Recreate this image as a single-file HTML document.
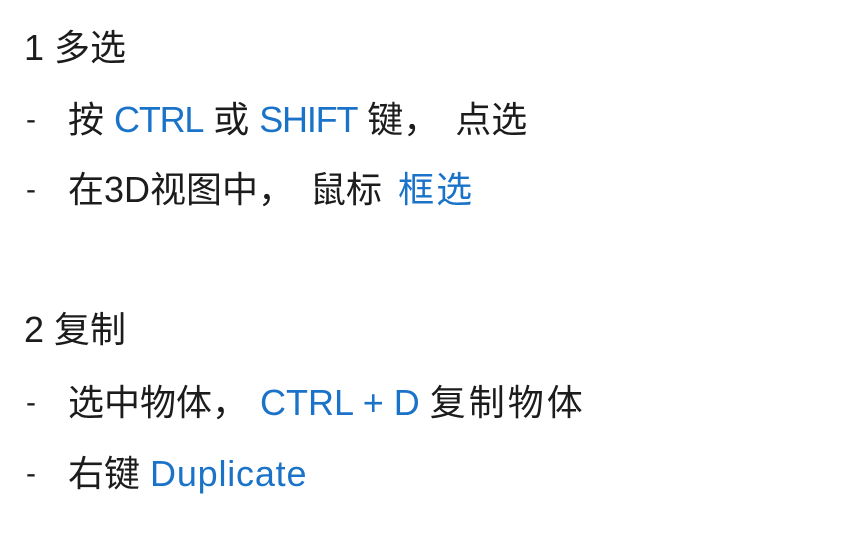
<!DOCTYPE html>
<html><head><meta charset="utf-8"><style>
html,body{margin:0;padding:0;background:#fff;width:853px;height:551px;overflow:hidden}
.l{position:absolute;left:24px;font-family:"Liberation Sans","Noto Sans CJK SC",sans-serif;font-size:36px;color:#1c1c1c;line-height:40px;white-space:nowrap}
.d{position:absolute;left:26px;font-size:30px}
.t{position:absolute;left:68px;}
.b{color:#1a73c8}
.c{margin-right:16px}
.n{letter-spacing:-1.2px}
</style></head><body>
<div class="l" style="top:28px">1 多选</div>
<div class="l" style="top:100px;left:0"><span class="d">-</span><span class="t">按 <span class="b n">CTRL</span> 或 <span class="b n">SHIFT</span> 键<span class="c">，</span>点选</span></div>
<div class="l" style="top:170px;left:0"><span class="d">-</span><span class="t">在3D视图中<span class="c">，</span>鼠标 <span class="b" style="margin-left:6px;letter-spacing:2px">框选</span></span></div>
<div class="l" style="top:310px">2 复制</div>
<div class="l" style="top:383px;left:0"><span class="d">-</span><span class="t">选中物体<span class="c" style="margin-right:12px">，</span><span class="b">CTRL + D</span> <span style="letter-spacing:3px">复制物体</span></span></div>
<div class="l" style="top:454px;left:0"><span class="d">-</span><span class="t">右键 <span class="b" style="letter-spacing:0.8px">Duplicate</span></span></div>
</body></html>
